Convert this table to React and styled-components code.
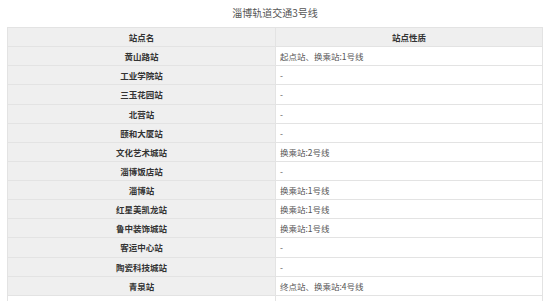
import styled, { createGlobalStyle } from "styled-components";

const GlobalStyle = createGlobalStyle`
  body {
    margin: 0;
    background: #fff;
    font-family: "Noto Sans CJK SC", "Liberation Sans", sans-serif;
  }
`;

const Page = styled.div`
  width: 550px;
  height: 301px;
  overflow: hidden;
`;

const Title = styled.div`
  height: 27px;
  line-height: 25px;
  text-align: center;
  font-size: 10px;
  color: #555;
`;

const Table = styled.table`
  margin: 0 8px 0 7px;
  width: 535px;
  border-collapse: collapse;
  table-layout: fixed;
  font-size: 8.5px;
`;

const Cell = styled.td`
  height: 18.14px;
  padding: 0 4px;
  border: 1px solid #e3e3e3;
  background: ${(props) => (props.gray ? "#efefef" : "#fff")};
  color: ${(props) => (props.bold ? "#333" : "#555")};
  font-weight: ${(props) => (props.bold ? "bold" : "normal")};
  text-align: ${(props) => (props.left ? "left" : "center")};
  white-space: nowrap;
`;

const stations = [
  ["黄山路站", "起点站、换乘站:1号线"],
  ["工业学院站", "-"],
  ["三玉花园站", "-"],
  ["北营站", "-"],
  ["颐和大厦站", "-"],
  ["文化艺术城站", "换乘站:2号线"],
  ["淄博饭店站", "-"],
  ["淄博站", "换乘站:1号线"],
  ["红星美凯龙站", "换乘站:1号线"],
  ["鲁中装饰城站", "换乘站:1号线"],
  ["客运中心站", "-"],
  ["陶瓷科技城站", "-"],
  ["青泉站", "终点站、换乘站:4号线"],
];

export default function App() {
  return (
    <Page>
      <GlobalStyle />
      <Title>淄博轨道交通3号线</Title>
      <Table>
        <colgroup>
          <col style={{ width: "268px" }} />
          <col style={{ width: "267px" }} />
        </colgroup>
        <tbody>
          <tr>
            <Cell gray bold>站点名</Cell>
            <Cell gray bold>站点性质</Cell>
          </tr>
          {stations.map(([name, kind]) => (
            <tr key={name}>
              <Cell gray bold>{name}</Cell>
              <Cell left>{kind}</Cell>
            </tr>
          ))}
          <tr>
            <Cell>&nbsp;</Cell>
            <Cell left>&nbsp;</Cell>
          </tr>
        </tbody>
      </Table>
    </Page>
  );
}
